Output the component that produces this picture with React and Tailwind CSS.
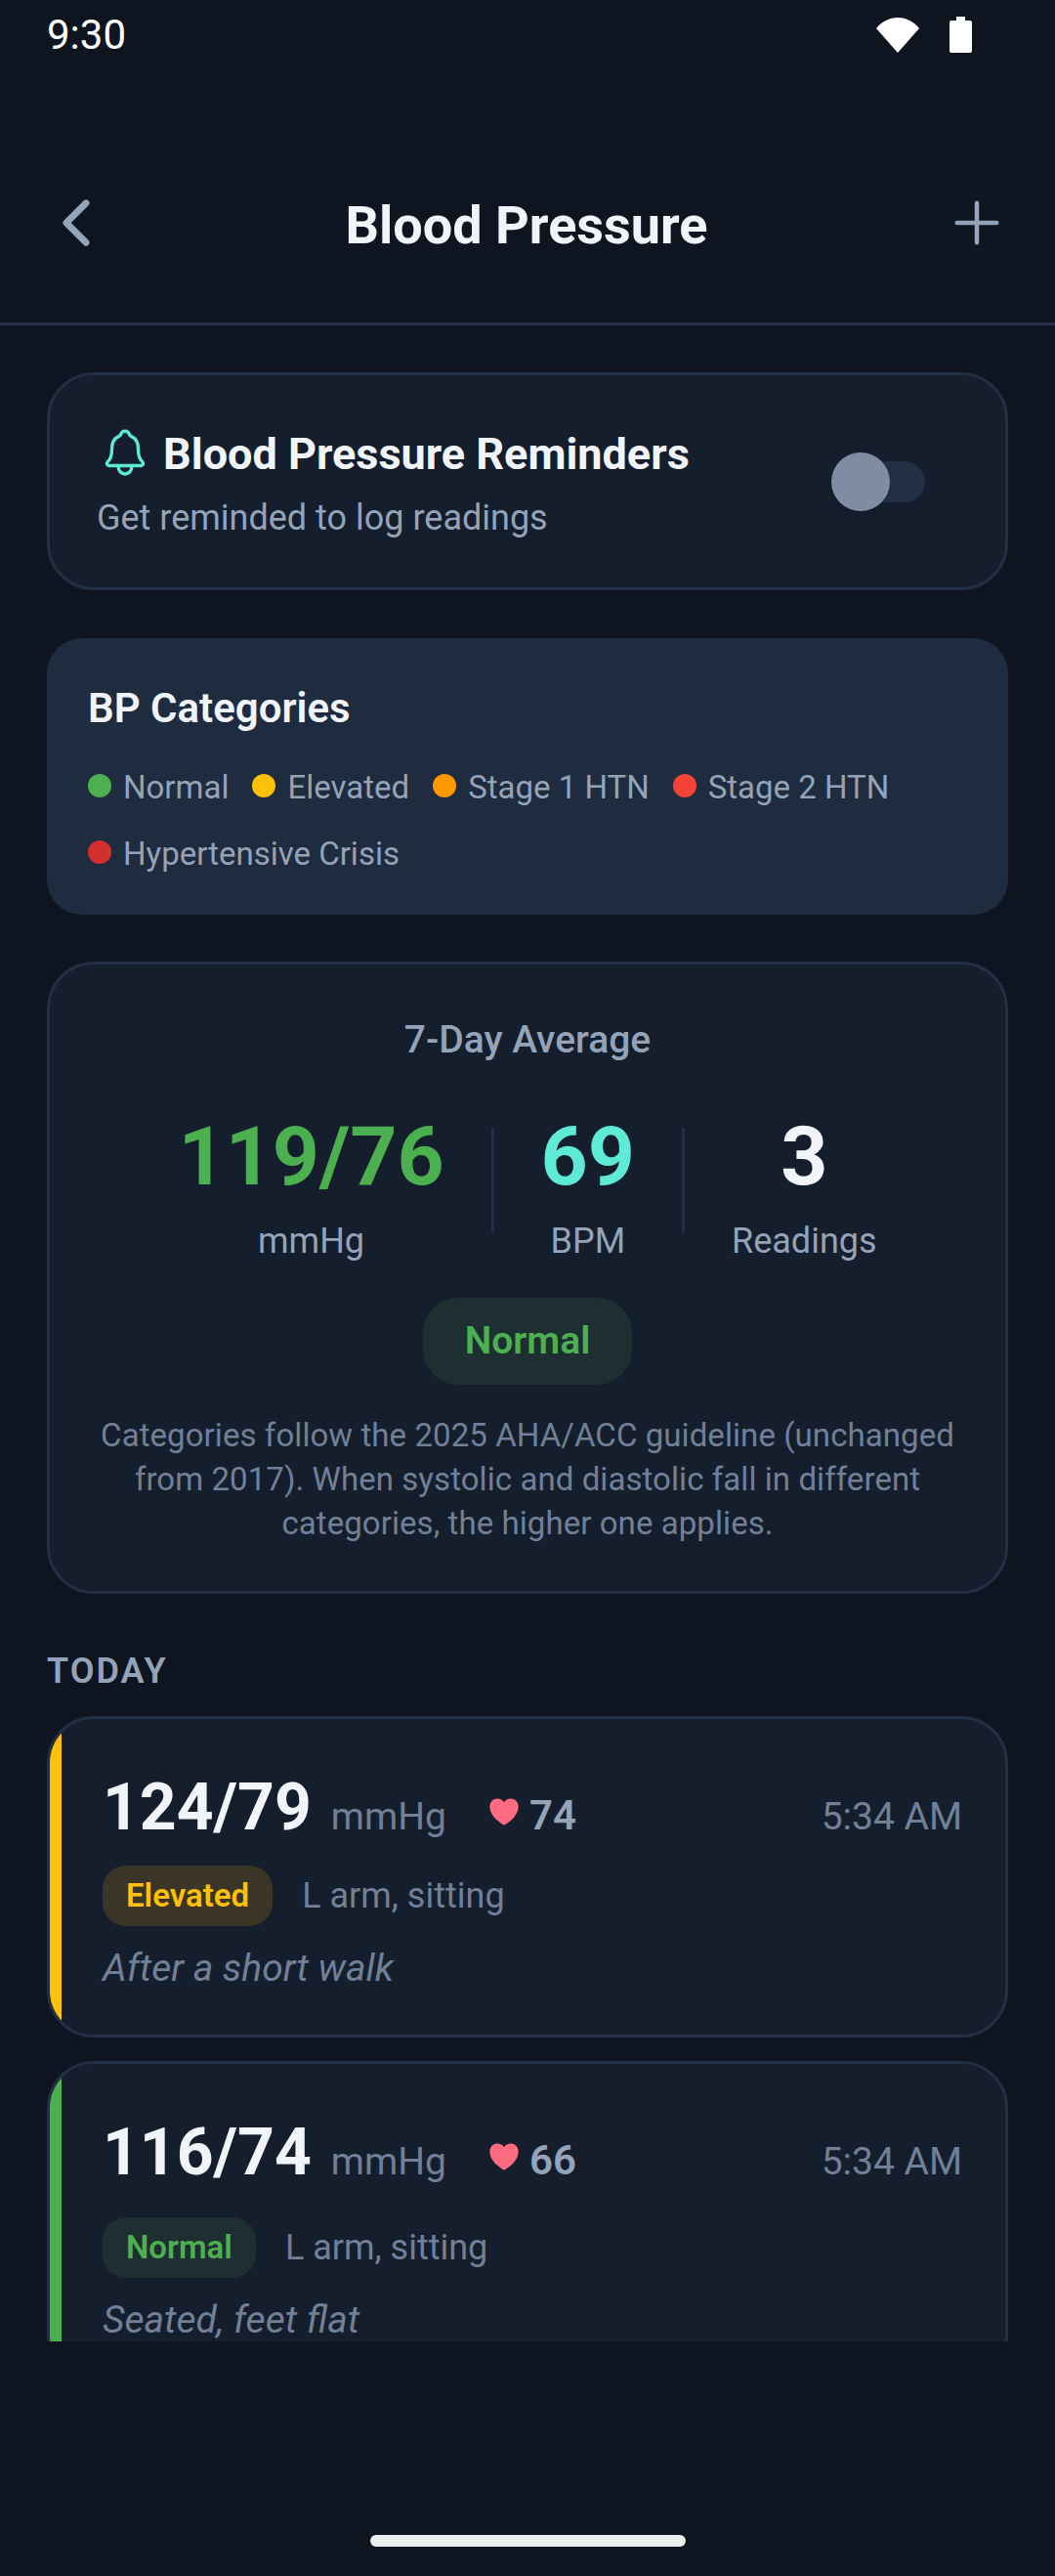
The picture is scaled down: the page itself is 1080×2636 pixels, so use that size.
import React from "react";
import { IoChevronBack, IoAdd, IoHeart, IoNotificationsOutline } from "react-icons/io5";

const legend = [
  { label: "Normal", dot: "bg-[#4caf50]" },
  { label: "Elevated", dot: "bg-[#ffc107]" },
  { label: "Stage 1 HTN", dot: "bg-[#ff9800]" },
  { label: "Stage 2 HTN", dot: "bg-[#f44336]" },
  { label: "Hypertensive Crisis", dot: "bg-[#d32f2f]" },
];

function StatusBar() {
  return (
    <div className="h-[66px] flex items-center justify-between pl-12 pr-[85px] pt-[5px] text-white">
      <span className="text-[42px] leading-none">9:30</span>
      <div className="flex items-center gap-[31px]">
        <svg width="44" height="36" viewBox="0 0 44 36" fill="white">
          <path d="M22 36 L0 11 C6 4 13 0 22 0 C31 0 38 4 44 11 Z" />
        </svg>
        <svg width="23" height="37" viewBox="0 0 23 37" fill="white">
          <path d="M7 0h9v4h5a2 2 0 0 1 2 2v29a2 2 0 0 1-2 2H2a2 2 0 0 1-2-2V6a2 2 0 0 1 2-2h5z" />
        </svg>
      </div>
    </div>
  );
}

function Header() {
  return (
    <div className="h-[267px] flex items-center justify-between pl-[42px] pr-[44px] pt-[60px] border-b-[3px] border-[#232f45]">
      <IoChevronBack size={72} className="text-[#94a3b8]" />
      <h1 className="mt-[5px] text-[54px] font-bold text-[#f1f5f9]">Blood Pressure</h1>
      <IoAdd size={72} className="text-[#94a3b8]" />
    </div>
  );
}

function ReminderCard() {
  return (
    <div className="h-[223px] rounded-[48px] border-[3px] border-[#232f45] bg-[#151e2d] pl-12 pr-[82px] flex items-center justify-between">
      <div className="pt-[4px]">
        <div className="flex items-center gap-[12px] pl-[2px]">
          <IoNotificationsOutline size={54} className="text-[#5eead4] -mt-[4px]" />
          <span className="text-[45px] font-bold leading-[56px] text-[#f1f5f9]">Blood Pressure Reminders</span>
        </div>
        <p className="text-[36px] leading-[46px] mt-[14px] text-[#94a3b8]">Get reminded to log readings</p>
      </div>
      <div className="relative w-[88px] h-[42px] rounded-full bg-[#232f45]">
        <div className="absolute -left-[8px] -top-[9px] w-[60px] h-[60px] rounded-full bg-[#7f8ca3] shadow-md" />
      </div>
    </div>
  );
}

function LegendCard() {
  return (
    <div className="h-[283px] mt-[49px] rounded-[36px] bg-[#1f2b3f] px-[42px] pt-[48px]">
      <h2 className="text-[42px] leading-[48px] font-semibold text-[#f1f5f9]">BP Categories</h2>
      <div className="flex flex-wrap gap-x-6 gap-y-6 mt-[35px]">
        {legend.map((item) => (
          <div key={item.label} className="flex items-center gap-3 h-11">
            <span className={`w-6 h-6 rounded-full -mt-[4px] ${item.dot}`} />
            <span className="text-[33px] leading-[44px] text-[#94a3b8]">{item.label}</span>
          </div>
        ))}
      </div>
    </div>
  );
}

function Stat({ value, label, color }) {
  return (
    <div className="flex flex-col items-center">
      <span className={`text-[84px] leading-[98px] font-bold ${color}`}>{value}</span>
      <span className="text-[36px] leading-[44px] mt-[15px] text-[#94a3b8]">{label}</span>
    </div>
  );
}

function AverageCard() {
  return (
    <div className="h-[647px] mt-[48px] rounded-[48px] border-[3px] border-[#232f45] bg-[#151e2d] pt-[54px] flex flex-col items-center">
      <h2 className="text-[39px] leading-[46px] font-medium text-[#94a3b8]">7-Day Average</h2>
      <div className="flex items-start justify-center gap-12 mt-[48px]">
        <Stat value="119/76" label="mmHg" color="text-[#4caf50]" />
        <div className="w-[3px] h-[107px] mt-[19px] bg-[#232f45]" />
        <Stat value="69" label="BPM" color="text-[#5eead4]" />
        <div className="w-[3px] h-[107px] mt-[19px] bg-[#232f45]" />
        <Stat value="3" label="Readings" color="text-[#f1f5f9]" />
      </div>
      <div className="mt-[36px] h-[89px] w-[214px] rounded-[36px] bg-[#1e2f31] flex items-center justify-center">
        <span className="text-[39px] font-semibold text-[#4caf50]">Normal</span>
      </div>
      <p className="mt-[29px] px-[48px] text-center text-[33px] leading-[45px] tracking-[0.07px] text-[#718096]">
        Categories follow the 2025 AHA/ACC guideline (unchanged from 2017). When systolic and diastolic fall in different categories, the higher one applies.
      </p>
    </div>
  );
}

function ReadingCard({ value, pulse, category, strip, badge, badgeText, note, nudge }) {
  return (
    <div className="relative h-[329px] shrink-0 rounded-[48px] border-[3px] border-[#232f45] bg-[#151e2d] overflow-hidden pl-[54px] pr-[44px] pt-[52px]">
      <div className={`absolute left-0 top-0 bottom-0 w-3 ${strip}`} />
      <div className="flex items-baseline justify-between h-[78px]">
        <div className="flex items-baseline">
          <span className="text-[66px] leading-[78px] font-bold text-[#f1f5f9]">{value}</span>
          <span className="text-[39px] ml-[20px] text-[#718096]">mmHg</span>
          <IoHeart size={36} className="ml-[41px] self-center mt-[8px] text-[#ff6b81]" />
          <span className="text-[42px] ml-[8px] font-semibold text-[#94a3b8]">{pulse}</span>
        </div>
        <span className="text-[39px] text-[#718096]">5:34 AM</span>
      </div>
      <div className={`flex items-center gap-[30px] ${nudge}`}>
        <span className={`h-[62px] px-[24px] rounded-[24px] flex items-center text-[33px] font-semibold ${badge} ${badgeText}`}>{category}</span>
        <span className="text-[36px] text-[#718096]">L arm, sitting</span>
      </div>
      <p className="mt-[20px] text-[39px] leading-[46px] italic text-[#718096]">{note}</p>
    </div>
  );
}

export default function App() {
  return (
    <div className="w-[1080px] h-[2636px] overflow-hidden bg-[#0e1521] flex flex-col font-['Roboto',sans-serif]">
      <StatusBar />
      <Header />
      <div className="h-[2063px] overflow-hidden px-12 pt-[48px]">
        <ReminderCard />
        <LegendCard />
        <AverageCard />
        <h3 className="mt-[57px] text-[36px] leading-[44px] font-semibold tracking-[2px] text-[#94a3b8]">TODAY</h3>
        <div className="flex flex-col gap-6 mt-[24px]">
          <ReadingCard
            value="124/79"
            pulse="74"
            category="Elevated"
            strip="bg-[#ffc107]"
            badge="bg-[#3a3527]"
            badgeText="text-[#ffc107]"
            note="After a short walk"
            nudge="mt-[20px]"
          />
          <ReadingCard
            value="116/74"
            pulse="66"
            category="Normal"
            strip="bg-[#4caf50]"
            badge="bg-[#1e2f31]"
            badgeText="text-[#4caf50]"
            note="Seated, feet flat"
            nudge="mt-[27px]"
          />
        </div>
      </div>
      <div className="flex-1 flex justify-center pt-[198px]">
        <div className="w-[323px] h-3 rounded-full bg-[#eceef0]" />
      </div>
    </div>
  );
}
